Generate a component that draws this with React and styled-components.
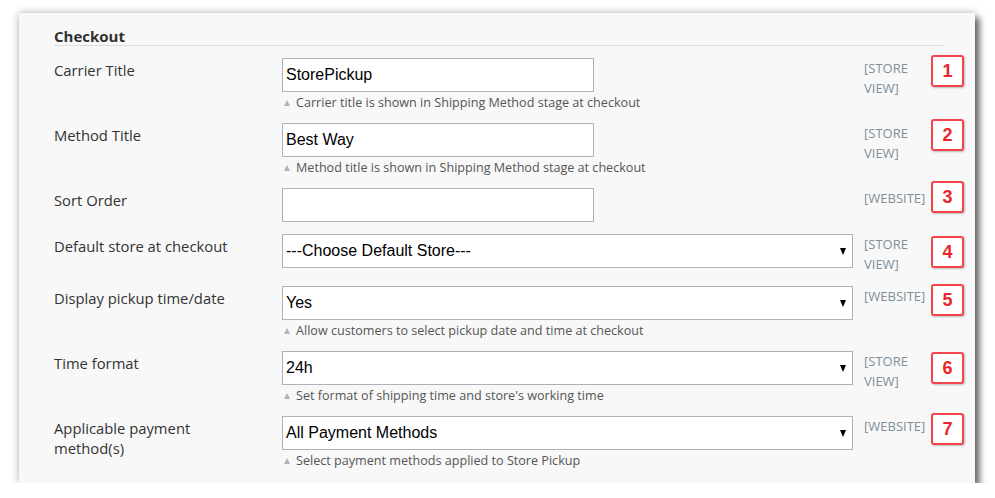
import React from 'react';
import styled, { createGlobalStyle } from 'styled-components';

const GlobalStyle = createGlobalStyle`
  html, body {
    margin: 0;
    padding: 0;
    background: #ffffff;
  }
  body {
    font-family: 'Open Sans', 'Liberation Sans', sans-serif;
  }
`;

const Panel = styled.section`
  box-sizing: border-box;
  width: 956px;
  margin: 13px 0 0 19px;
  padding: 14px 10px 14px 35px;
  background: #f8f8f8;
  box-shadow: 5px 5px 6px rgba(0, 0, 0, 0.5), 0 0 8px rgba(0, 0, 0, 0.3);
`;

const Heading = styled.h2`
  margin: 0 20px 12px 0;
  padding: 0;
  font-size: 15px;
  line-height: 18px;
  font-weight: 700;
  color: #303030;
  border-bottom: 1px solid #dcdcdc;
`;

const Row = styled.div`
  display: grid;
  grid-template-columns: 228px 571px 78px 34px;
  align-items: start;
  margin-bottom: 12px;

  &:last-child {
    margin-bottom: 0;
  }
`;

const Label = styled.div`
  padding-top: 2px;
  padding-right: 30px;
  font-size: 14.8px;
  line-height: 20px;
  color: #333333;
`;

const Control = styled.div`
  display: flex;
  flex-direction: column;
  align-items: flex-start;
`;

const TextInput = styled.div`
  box-sizing: border-box;
  width: ${(p) => (p.$wide ? '571px' : '312px')};
  height: 34px;
  display: flex;
  align-items: center;
  justify-content: space-between;
  padding: 0 6px 0 3px;
  background: #ffffff;
  border: 1px solid #adb1b8;
  font-family: 'Liberation Sans', Arial, sans-serif;
  font-size: 16px;
  color: #000000;
`;

const Arrow = styled.span`
  width: 0;
  height: 0;
  border-left: 3.5px solid transparent;
  border-right: 3.5px solid transparent;
  border-top: 7px solid #000000;
`;

const Note = styled.div`
  display: flex;
  align-items: center;
  margin-top: 2px;
  padding-left: 2px;
  font-size: 12.6px;
  line-height: 17px;
  color: #555555;

  &::before {
    content: '';
    width: 0;
    height: 0;
    margin-right: 6px;
    border-left: 3.5px solid transparent;
    border-right: 3.5px solid transparent;
    border-bottom: 6px solid #a9b5bb;
  }
`;

const Scope = styled.div`
  padding: 0 0 0 11px;
  font-size: 13px;
  line-height: 20px;
  color: #808e99;
  text-transform: uppercase;
  white-space: nowrap;
`;

const Badge = styled.div`
  box-sizing: border-box;
  width: 33px;
  height: 32px;
  margin-top: ${(p) => p.$offset}px;
  display: flex;
  align-items: center;
  justify-content: center;
  background: #ffffff;
  border: 2px solid #f5454a;
  border-radius: 3px;
  box-shadow: 1px 1px 2px rgba(0, 0, 0, 0.25);
  font-family: 'Liberation Sans', Arial, sans-serif;
  font-weight: 700;
  font-size: 18px;
  color: #e8262b;
`;

const fields = [
  { label: 'Carrier Title', value: 'StorePickup', note: 'Carrier title is shown in Shipping Method stage at checkout', scope: ['[Store', 'View]'], badge: -3 },
  { label: 'Method Title', value: 'Best Way', note: 'Method title is shown in Shipping Method stage at checkout', scope: ['[Store', 'View]'], badge: -4 },
  { label: 'Sort Order', value: '', scope: ['[Website]'], badge: -7 },
  { label: 'Default store at checkout', value: '---Choose Default Store---', select: true, scope: ['[Store', 'View]'], badge: 2 },
  { label: 'Display pickup time/date', value: 'Yes', select: true, note: 'Allow customers to select pickup date and time at checkout', scope: ['[Website]'], badge: -2 },
  { label: 'Time format', value: '24h', select: true, note: "Set format of shipping time and store's working time", scope: ['[Store', 'View]'], badge: 1 },
  { label: 'Applicable payment method(s)', value: 'All Payment Methods', select: true, note: 'Select payment methods applied to Store Pickup', scope: ['[Website]'], badge: -3 },
];

export default function App() {
  return (
    <>
      <GlobalStyle />
      <Panel>
        <Heading>Checkout</Heading>
        {fields.map((f, i) => (
          <Row key={f.label}>
            <Label>{f.label}</Label>
            <Control>
              <TextInput $wide={f.select}>
                <span>{f.value}</span>
                {f.select && <Arrow />}
              </TextInput>
              {f.note && <Note>{f.note}</Note>}
            </Control>
            <Scope>
              {f.scope.map((s) => (
                <div key={s}>{s}</div>
              ))}
            </Scope>
            <Badge $offset={f.badge}>{i + 1}</Badge>
          </Row>
        ))}
      </Panel>
    </>
  );
}
